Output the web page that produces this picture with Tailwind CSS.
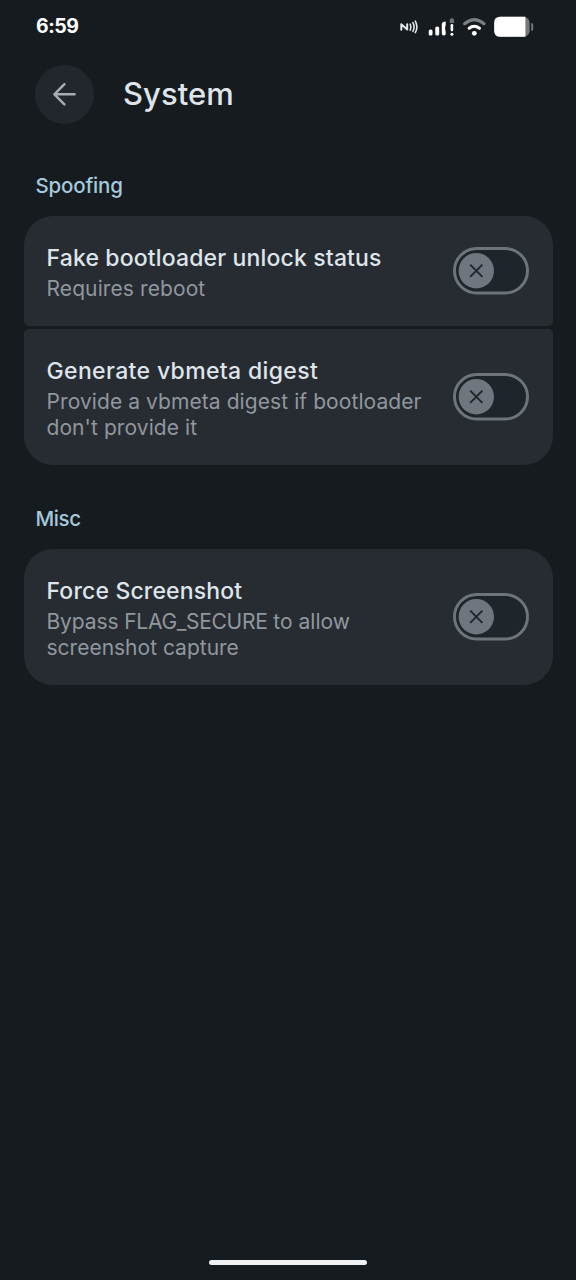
<!DOCTYPE html>
<html lang="en">
<head>
<meta charset="utf-8">
<title>System</title>
<script src="https://cdn.jsdelivr.net/npm/@tailwindcss/browser@4"></script>
</head>
<body class="bg-[#161b1f]">
<svg class="hidden">
  <symbol id="switch-off" viewBox="0 0 76 48">
    <rect x="1.5" y="1.5" width="73" height="44.5" rx="22.25" fill="#1e252b" stroke="#6d747c" stroke-width="3"/>
    <circle cx="23.3" cy="23.7" r="17.7" fill="#6f767e"/>
    <path d="M17.2 17.6l12.2 12.2M29.4 17.6L17.2 29.8" stroke="#20262c" stroke-width="1.9" fill="none"/>
  </symbol>
</svg>
<div class="flex h-[1280px] w-[576px] flex-col overflow-hidden bg-[#161b1f] font-['Inter',sans-serif]">
  <div class="flex h-[53px] items-center justify-between pl-[36px] pr-[42px]">
    <span class="pt-[1px] text-[19.5px] leading-none font-bold tracking-[-0.45px] text-white">6:59</span>
    <svg class="h-[24px] w-[136px]" viewBox="398 14.5 136 24" fill="none">
      <g stroke="#e4e7e9" stroke-width="2" stroke-linecap="round" stroke-linejoin="round">
        <path d="M401.3 29.2v-5.4l5.9 5.2v-5.3"/>
        <path d="M410.2 23.7q1.6 3 0 6M412.9 22.2q2.4 4.3 0 8.7M415.3 20.6q3.2 6 0 11.5" stroke-width="1.6"/>
      </g>
      <g fill="#fff">
        <rect x="428.7" y="29" width="3.8" height="6" rx="1.6"/>
        <rect x="435.3" y="26" width="3.9" height="9" rx="1.6"/>
        <path d="M445.7 21v3.4q-1.6 3.3 0 7.1v2.2q-.6 1.3-2 1.3-1.9 0-1.9-2v-9.2q0-2.5 3.9-2.8z"/>
        <rect x="450.6" y="23.5" width="2.6" height="7.2" rx="1.2"/>
        <circle cx="451.9" cy="33.7" r="1.5"/>
        <circle cx="474.3" cy="32.8" r="2.4"/>
      </g>
      <path d="M449.7 22.6v-2.6q0-2.2 2-2.2h.4q2 0 2 2v2.8z" fill="#6d7276"/>
      <path d="M464.6 23.2q9.7-8.2 19.4 0" stroke="#7a7f82" stroke-width="3.1" stroke-linecap="round"/>
      <path d="M469.2 27.7q5.1-3.9 10.2 0" stroke="#fff" stroke-width="3.1" stroke-linecap="round"/>
      <rect x="494.2" y="16.3" width="35.4" height="20" rx="6" fill="#74787b"/>
      <path d="M500.2 16.3h25.2v20h-25.2q-6 0-6-6v-8q0-6 6-6z" fill="#fff"/>
      <path d="M531.2 22.4q2 0 2 2v4q0 2-2 2z" fill="#74787b"/>
    </svg>
  </div>
  <header class="mt-[12px] flex h-[59px] items-center pl-[35px]">
    <div class="flex size-[59px] items-center justify-center rounded-full bg-[#21272c]">
      <svg class="size-[23px]" viewBox="0 0 23 23" fill="none" stroke="#a8adb3" stroke-width="2.4" stroke-linecap="round" stroke-linejoin="round"><path d="M21.6 11.3H1.4M11.4 1.2L1.4 11.3L11.4 21.4"/></svg>
    </div>
    <h1 class="ml-[29px] pb-[2px] text-[31px] leading-none font-[450] tracking-[0.05px] text-[#dfe4ea]">System</h1>
  </header>
  <main class="px-[23.5px]">
    <h2 class="mt-[46px] h-[32px] pl-[12px] text-[20.5px] leading-[32px] font-medium tracking-[-0.18px] text-[#a5c8dd]">Spoofing</h2>
    <section class="mt-[14px] flex flex-col gap-[3px]">
      <div class="flex h-[110px] items-center justify-between rounded-t-[29px] rounded-b-[5px] bg-[#262c32] pr-[24px] pl-[23px]">
        <div>
          <h3 class="text-[23px] leading-[36px] font-medium tracking-[0.15px] whitespace-nowrap text-[#dfe4ea]">Fake bootloader unlock status</h3>
          <p class="text-[21px] leading-[26px] tracking-[0.1px] whitespace-nowrap text-[#91979d]">Requires reboot</p>
        </div>
        <svg class="h-[48px] w-[76px] shrink-0"><use href="#switch-off"/></svg>
      </div>
      <div class="flex h-[136px] items-center justify-between rounded-t-[5px] rounded-b-[29px] bg-[#262c32] pr-[24px] pl-[23px]">
        <div>
          <h3 class="text-[23px] leading-[36px] font-medium tracking-[0.36px] whitespace-nowrap text-[#dfe4ea]">Generate vbmeta digest</h3>
          <p class="text-[21px] leading-[26px] tracking-[0.08px] whitespace-nowrap text-[#91979d]">Provide a vbmeta digest if bootloader<br>don't provide it</p>
        </div>
        <svg class="h-[48px] w-[76px] shrink-0"><use href="#switch-off"/></svg>
      </div>
    </section>
    <h2 class="mt-[38px] h-[32px] pl-[12px] text-[20.5px] leading-[32px] font-medium tracking-[-0.4px] text-[#a5c8dd]">Misc</h2>
    <section class="mt-[14px] flex h-[136px] items-center justify-between rounded-[29px] bg-[#262c32] pr-[24px] pl-[23px]">
      <div>
        <h3 class="text-[23px] leading-[36px] font-medium tracking-[0.15px] whitespace-nowrap text-[#dfe4ea]">Force Screenshot</h3>
        <p class="text-[21px] leading-[26px] whitespace-nowrap text-[#91979d]"><span class="tracking-[-0.12px]">Bypass</span> <span class="tracking-[-0.3px]">FLAG_SECURE</span> to allow<br>screenshot capture</p>
      </div>
      <svg class="h-[48px] w-[76px] shrink-0"><use href="#switch-off"/></svg>
    </section>
  </main>
  <div class="mx-auto mt-auto mb-[15px] h-[5px] w-[158px] rounded-full bg-[#eff0f1]"></div>
</div>
</body>
</html>
